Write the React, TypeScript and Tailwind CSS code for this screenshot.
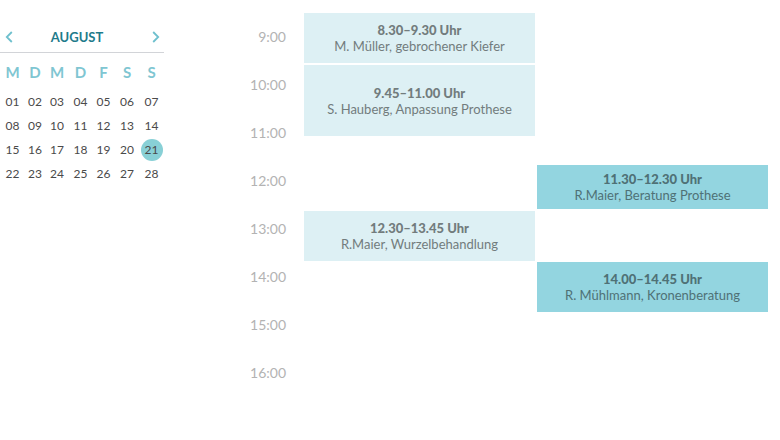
import React from "react";

type Appointment = { time: string; title: string; box: string };

const WEEKDAYS = ["M", "D", "M", "D", "F", "S", "S"];
const WEEKS = [
  ["01", "02", "03", "04", "05", "06", "07"],
  ["08", "09", "10", "11", "12", "13", "14"],
  ["15", "16", "17", "18", "19", "20", "21"],
  ["22", "23", "24", "25", "26", "27", "28"],
];
const SELECTED = "21";
const HOURS = ["9:00", "10:00", "11:00", "12:00", "13:00", "14:00", "15:00", "16:00"];

const FIRST_ROOM: Appointment[] = [
  { time: "8.30–9.30 Uhr", title: "M. Müller, gebrochener Kiefer", box: "h-[50px]" },
  { time: "9.45–11.00 Uhr", title: "S. Hauberg, Anpassung Prothese", box: "mt-0.5 h-[71px]" },
  { time: "12.30–13.45 Uhr", title: "R.Maier, Wurzelbehandlung", box: "mt-[75px] h-[50px]" },
];
const SECOND_ROOM: Appointment[] = [
  { time: "11.30–12.30 Uhr", title: "R.Maier, Beratung Prothese", box: "mt-[152px] h-11" },
  { time: "14.00–14.45 Uhr", title: "R. Mühlmann, Kronenberatung", box: "mt-[53px] h-[50px]" },
];

function Chevron({ d }: { d: string }) {
  return (
    <svg width="8" height="12" viewBox="0 0 8 12" fill="none" stroke="#6fc0ce" strokeWidth="1.8" aria-hidden="true">
      <path d={d} />
    </svg>
  );
}

function Calendar() {
  return (
    <section className="w-41 shrink-0" aria-label="Kalender">
      <header className="flex h-[53px] items-center justify-between border-b border-[#d2d4d8] px-1 pt-[22px]">
        <button type="button" aria-label="Vorheriger Monat" className="flex w-4 justify-start pl-px">
          <Chevron d="M6.8 1 1.8 6l5 5" />
        </button>
        <h1 className="pr-2.5 text-[13px] leading-4 font-bold text-[#1e7b8b]">AUGUST</h1>
        <button type="button" aria-label="Nächster Monat" className="flex w-4 justify-end">
          <Chevron d="M1.2 1l5 5-5 5" />
        </button>
      </header>
      <table className="w-full table-fixed border-collapse text-center">
        <colgroup>
          <col className="w-[25px]" />
          <col className="w-[20px]" />
          <col className="w-6" />
          <col className="w-[23px]" />
          <col className="w-[23px]" />
          <col className="w-6" />
          <col className="w-[25px]" />
        </colgroup>
        <thead>
          <tr className="h-[37px] text-[15px] leading-5 text-[#7fc6d2]">
            {WEEKDAYS.map((day, i) => (
              <th key={i} scope="col" className="p-0 font-bold">{day}</th>
            ))}
          </tr>
        </thead>
        <tbody>
          {WEEKS.map((week) => (
            <tr key={week[0]} className="h-6 text-xs text-[#4a4a4a]">
              {week.map((day) => (
                <td key={day} className="p-0">
                  <button
                    type="button"
                    className={
                      day === SELECTED
                        ? "mx-auto flex size-[22px] items-center justify-center rounded-full bg-[#88d0d6]"
                        : "mx-auto flex h-[22px] items-center justify-center"
                    }
                  >
                    {day}
                  </button>
                </td>
              ))}
            </tr>
          ))}
        </tbody>
      </table>
    </section>
  );
}

function Column({ items, tone }: { items: Appointment[]; tone: string }) {
  return (
    <div className="flex min-w-0 flex-1 flex-col">
      {items.map((item) => (
        <article
          key={item.time}
          className={`flex flex-col items-center justify-center text-center text-[13px] leading-4 ${tone} ${item.box}`}
        >
          <h2 className="font-black">{item.time}</h2>
          <p>{item.title}</p>
        </article>
      ))}
    </div>
  );
}

export default function App() {
  return (
    <div className="flex min-h-screen bg-white pr-3 font-['Lato','Liberation_Sans',sans-serif]">
      <Calendar />
      <main className="flex min-w-0 flex-1 gap-[18px] pt-[13px]">
        <ol className="w-[122px] shrink-0 text-right text-sm text-[#b3b3b3]">
          {HOURS.map((hour) => (
            <li key={hour} className="flex h-12 items-center justify-end">{hour}</li>
          ))}
        </ol>
        <div className="flex min-w-0 flex-1 gap-0.5">
          <Column items={FIRST_ROOM} tone="bg-[#ddf0f4] text-[#727c7d]" />
          <Column items={SECOND_ROOM} tone="bg-[#93d5e0] text-[#4f7176]" />
        </div>
      </main>
    </div>
  );
}
